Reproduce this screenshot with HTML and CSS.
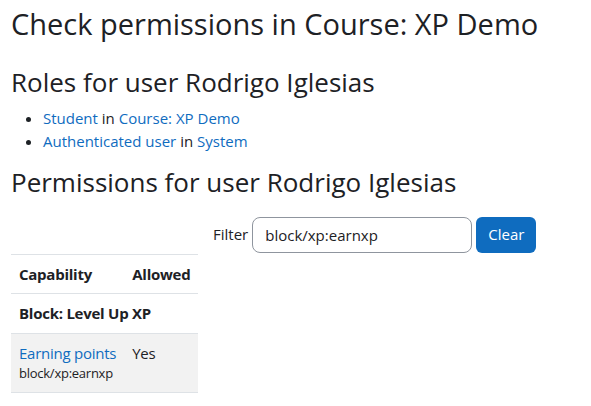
FILE: index.html
```html
<!DOCTYPE html>
<html lang="en">
<head>
<meta charset="utf-8">
<title>Check permissions</title>
<link rel="stylesheet" href="styles.css">
</head>
<body>
<main class="page">
  <h2 class="title">Check permissions in Course: XP Demo</h2>
  <h3 class="section">Roles for user Rodrigo Iglesias</h3>
  <ul class="roles">
    <li><a href="#">Student</a> in <a href="#">Course: XP Demo</a></li>
    <li><a href="#">Authenticated user</a> in <a href="#">System</a></li>
  </ul>
  <h3 class="section">Permissions for user Rodrigo Iglesias</h3>
  <form class="filter">
    <label class="filter-label" for="f">Filter</label>
    <input class="filter-input" id="f" type="text" value="block/xp:earnxp">
    <button class="btn-clear" type="button">Clear</button>
  </form>
  <table class="caps">
    <thead>
      <tr><th>Capability</th><th>Allowed</th></tr>
    </thead>
    <tbody>
      <tr class="group"><th colspan="2">Block: Level Up XP</th></tr>
      <tr class="row-striped">
        <td><a href="#">Earning points</a><div class="capname">block/xp:earnxp</div></td>
        <td>Yes</td>
      </tr>
    </tbody>
  </table>
</main>
</body>
</html>
```

FILE: styles.css
```css
* { box-sizing: border-box; }
html, body { margin: 0; background: #fff; }
body {
  font-family: "Open Sans", "Noto Sans", sans-serif;
  font-size: 15px;
  line-height: 1.5;
  color: #1d2125;
}
a { color: #0f6cbf; text-decoration: none; }
.page { padding: 7px 11px; }
.title {
  font-size: 29px;
  font-weight: 400;
  line-height: 1.2;
  margin: 0 0 25.5px;
}
.section {
  font-size: 26px;
  font-weight: 400;
  line-height: 1.2;
  margin: 0 0 9px;
}
.roles {
  margin: 0 0 14.5px;
  padding-left: 32px;
}
.filter {
  display: flex;
  align-items: center;
  margin: 18.5px 0 1px 202px;
}
.filter-label { margin-right: 4px; }
.filter-input {
  width: 220px;
  height: 36px;
  border: 1px solid #8f959e;
  border-radius: 8px;
  padding: 0 12px;
  font: inherit;
  color: #1d2125;
}
.btn-clear {
  height: 36px;
  padding: 0 12px;
  border: 0;
  border-radius: 6px;
  background: #0f6cbf;
  color: #fff;
  font: inherit;
  margin-left: 4px;
}
.caps {
  border-collapse: collapse;
  letter-spacing: -0.25px;
}
.caps th, .caps td {
  text-align: left;
  vertical-align: top;
  padding: 8px;
  border-top: 1px solid #dee2e6;
}
.caps thead th { border-bottom: 1px solid #dee2e6; }
.caps th { font-weight: 700; }
.caps tbody tr:last-child td { border-bottom: 1px solid #dee2e6; }
.row-striped { background: #f2f2f2; }
.capname { font-size: 13px; line-height: 1.5; }
```
